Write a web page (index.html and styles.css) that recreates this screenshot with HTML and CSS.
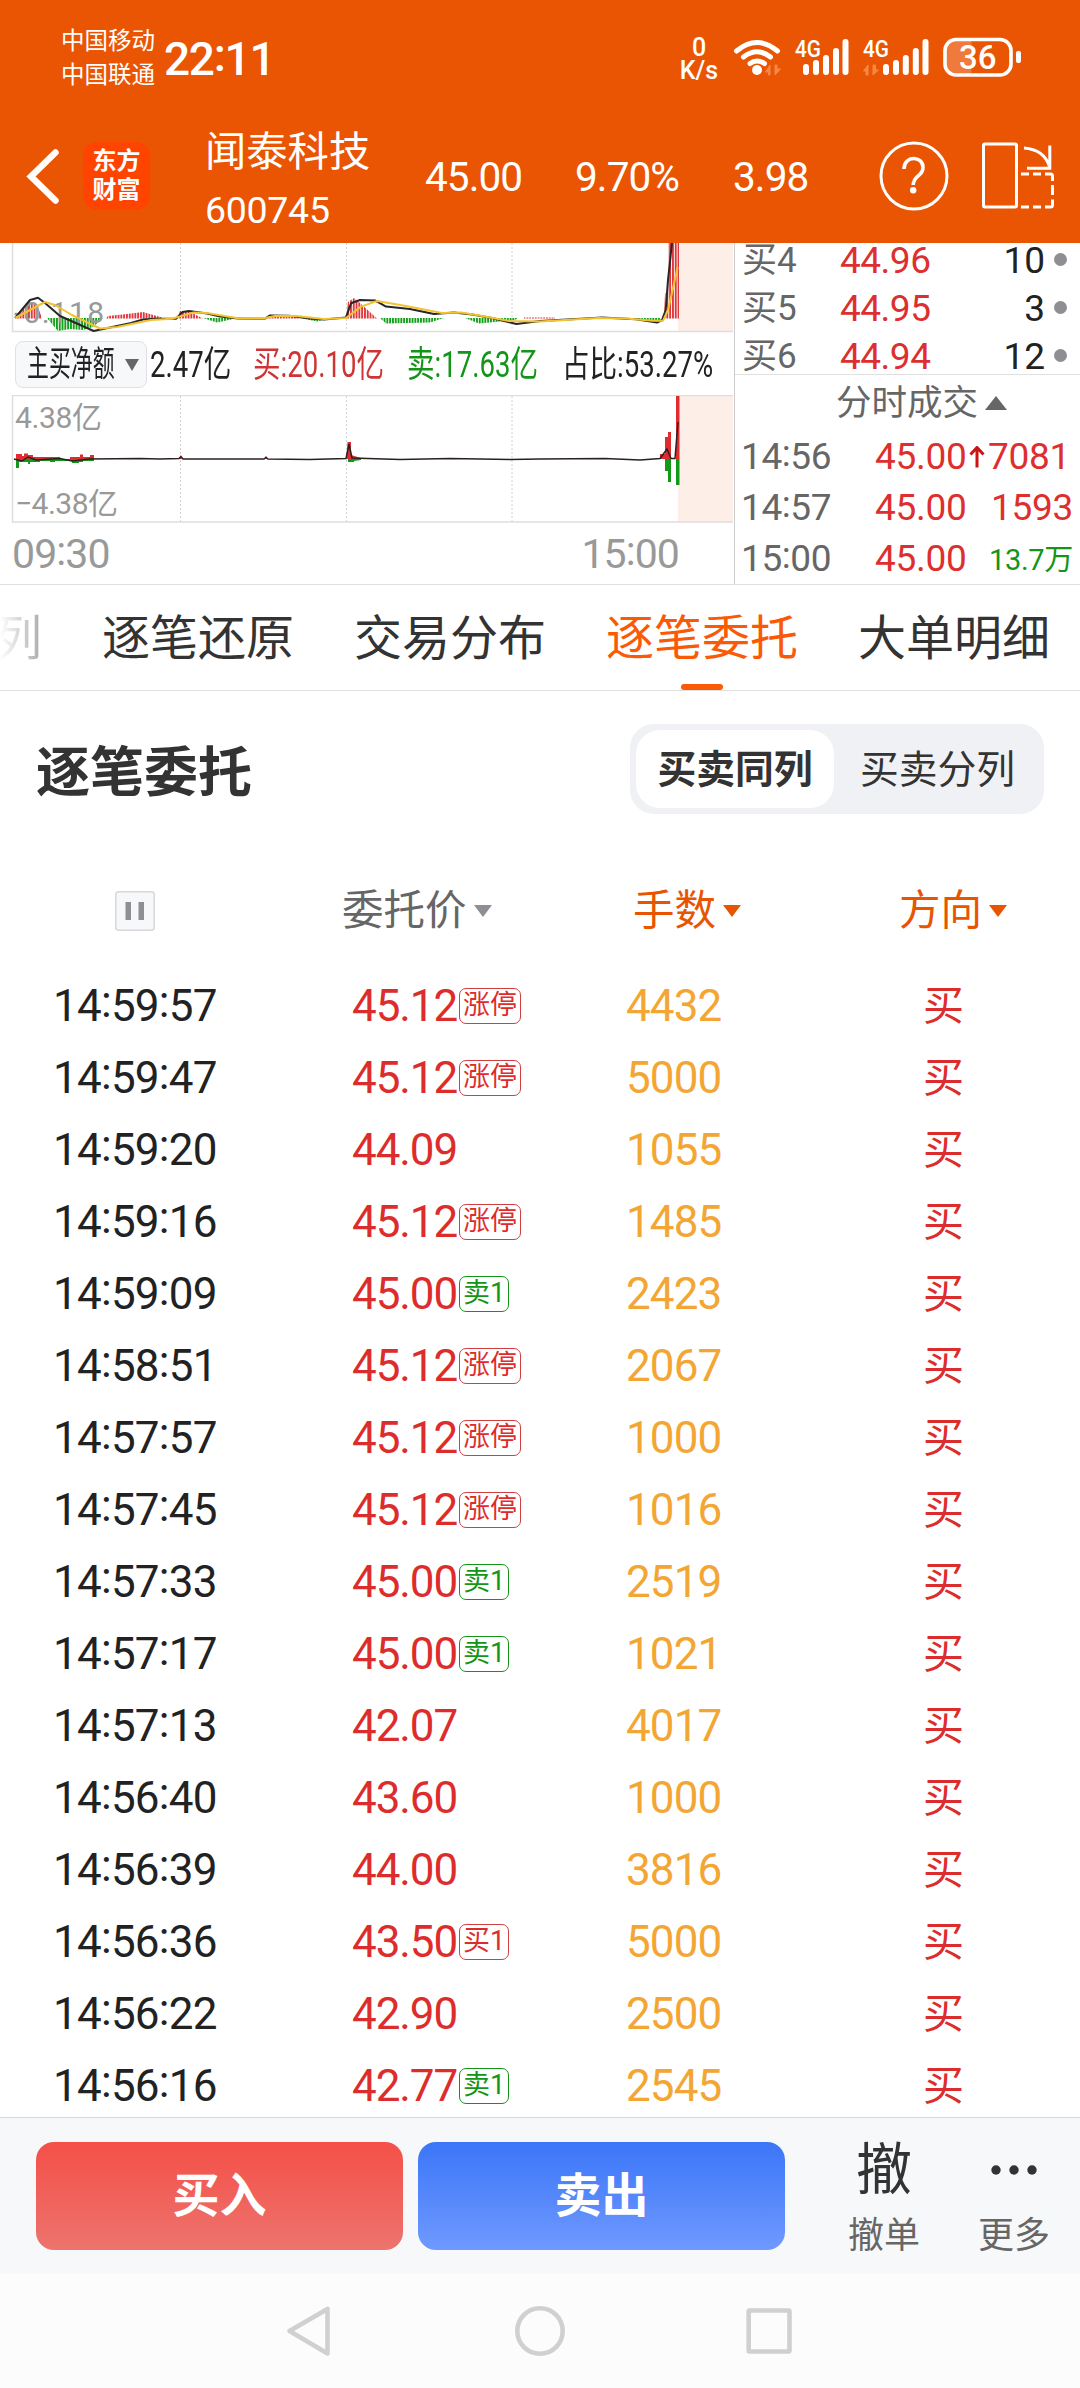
FILE: index.html
```html
<!DOCTYPE html>
<html lang="zh-CN">
<head>
<meta charset="utf-8">
<title>闻泰科技 600745</title>
<link rel="stylesheet" href="styles.css">
</head>
<body>
<div class="screen">
  <header class="top">
    <div class="status">
      <div class="carriers"><span>中国移动</span><span>中国联通</span></div>
      <div class="clock">22<i>:</i>11</div>
      <div class="speed"><span>0</span><span>K/s</span></div>
      <svg class="status-icons" width="300" height="50" viewBox="730 32 300 50">
        <g fill="none" stroke="#fff" stroke-width="5" stroke-linecap="round">
          <path d="M736.5 51 Q757 34 777.500 51"/>
          <path d="M743.500 57 Q757 46.500 770.500 57"/>
          <path d="M750 63.500 Q757 58.500 764.500 63.500"/>
        </g>
        <circle cx="757" cy="70" r="5" fill="#fff"/>
        <g fill="#f68748">
          <path d="M770 75V65L765.500 72H768.500V75ZM775 65V75L780.500 69H777V65Z" stroke="#f68748"/>
          <path d="M868 75V65L863.500 71H866V75ZM873 65V75L878.500 70H875.500V65Z" stroke="#f68748"/>
        </g>
        <g fill="#fff" class="net-label">
          <text x="795" y="56.500" textLength="26" lengthAdjust="spacingAndGlyphs">4G</text>
          <text x="863" y="56.500" textLength="26" lengthAdjust="spacingAndGlyphs">4G</text>
        </g>
        <g stroke="#fff" stroke-width="6" stroke-linecap="round">
          <path d="M806 67V72M816 63V72M826 58V72M836 51V72M845.500 42V72"/>
          <path d="M886 67V72M896 63V72M905.800 58V72M915.800 51V72M925.500 42V72"/>
        </g>
        <path d="M971.500 40V75H957Q946 75 946 64V50Q946 40 957 40Z" fill="#f07a3b"/>
        <rect x="945" y="39.500" width="66" height="35.500" rx="11" fill="none" stroke="#fff" stroke-width="3.600"/>
        <rect x="1016" y="51" width="5" height="12" rx="2" fill="#fff"/>
        <text x="959" y="69" class="battery" textLength="37.500" lengthAdjust="spacingAndGlyphs">36</text>
      </svg>
    </div>
    <div class="titlebar">
      <svg class="back" width="34" height="60" viewBox="0 0 34 60"><path d="M29.500 6.500L5 30.500L29.500 54.500" fill="none" stroke="#fff" stroke-width="6.500" stroke-linecap="round" stroke-linejoin="miter"/></svg>
      <div class="logo"><span>东方</span><span>财富</span></div>
      <div class="stock"><span class="stock-name">闻泰科技</span><span class="stock-code">600745</span></div>
      <span class="quote price">45.00</span>
      <span class="quote pct">9.70%</span>
      <span class="quote chg">3.98</span>
      <svg class="help" width="70" height="70" viewBox="879 140.500 70 70" fill="none" stroke="#fff" stroke-width="3">
        <circle cx="914" cy="175.500" r="33"/>
        <path d="M904 168.500C904 154.500 923 155 923 167C923 176 913.200 175 913.200 184.500" stroke-width="3.600"/>
        <circle cx="913.200" cy="189.800" r="3.200" fill="#fff" stroke="none"/>
      </svg>
      <svg class="rotate" width="76" height="70" viewBox="980 140.500 76 70" fill="none" stroke="#fff" stroke-width="3">
        <rect x="983.500" y="143.500" width="33" height="63" rx="1.500"/>
        <path d="M1024 147.500Q1044 149 1049.500 166M1049.800 145V167.700H1027"/>
        <path d="M1021 173.500H1029M1033 173.500H1041M1045 173.500H1050.500Q1052.500 173.500 1052.500 175.500V180.500M1052.500 184.500V194.500M1052.500 199V204.500Q1052.500 206.500 1050.500 206.500H1045M1041 206.500H1033M1029 206.500H1021"/>
      </svg>
    </div>
  </header>

  <section class="market">
    <div class="charts">
      <svg width="734" height="91" viewBox="0 243 734 91">
        <defs>
          <pattern id="red" width="2.800" height="10" patternUnits="userSpaceOnUse"><rect width="1.900" height="10" fill="#e0383c"/></pattern>
          <pattern id="green" width="2.800" height="10" patternUnits="userSpaceOnUse"><rect width="1.900" height="10" fill="#14a01a"/></pattern>
        </defs>
        <rect x="678" y="243" width="55" height="88" fill="#fdeee8"/>
        <path d="M180.500 243V331M346.500 243V331M512 243V331" stroke="#d2d2d2" stroke-dasharray="2 2"/>
        <path d="M12.500 243V331.500H733" fill="none" stroke="#dedede" stroke-width="1.500"/>
        <path fill="url(#red)" d="M15 318.500L30 301L38 307L42 318.500ZM106 318.500L108 316L127 314L143 312L162 317.500V318.500ZM177 318.500L180 311H188L203 318.500ZM265 318.500L270 315L290 316L300 318.500ZM346 318.500L348 302L354 298L360 303L377 318.500ZM524 317.500H555V318.500H524ZM664 318.500L665 293H668V243H679V318.500Z"/>
        <path fill="url(#green)" d="M47 318L58 331L70 329L83 330L93 327L103 318ZM203 318L217 322.500L238 318ZM300 318L317 321.500L330 318ZM380 318L386 323.500L430 322.500L444 318ZM465 318L479 323.500L515 320L518 318ZM630 318H660V320H640Z"/>
        <text class="axis" x="14" y="323" textLength="90">-0.118</text>
        <path fill="none" stroke="#272727" stroke-width="2" stroke-linejoin="round" d="M15 318L30 300L38 297.700L45 303L60 316L69 320L93.700 331L103 329L131 323L143 319.500L155 318.700H176L182.500 312L189 311L207 313.500L220 316.600L238 318.600H265L270 315.400L289 315.700L310 318.600L324 319.600L346 317.400L351 303.300L360 300L375.500 300.600L386 306.600L410 309L434 314L454 312.600L472 314.600L492 318L516.500 324L540 321L585 318.600L602 317.600L636 319.300L657 322.600L662 320L665.700 310L668 280L672 243"/>
        <path fill="none" stroke="#f3c32f" stroke-width="2" stroke-linejoin="round" d="M15 318L45 302L55 305L72 315L100 328.500L117 327L151 320L172 318.700L193 312.600L207 313L238 318.300L265 318L275 316L296 316L324 319L346 318L361 306.600L377 301L406 306L442 313L461 312.600L482 316L509 321L540 321.600L598 318L626 318.400L653 320.700H663L668 310L672.600 290L677.700 267"/>
      </svg>
      <div class="stats">
        <div class="picker"><span class="narrow">主买净额</span><svg width="14" height="12"><path d="M0 0H14L7 12Z" fill="#666"/></svg></div>
        <div class="stat net"><span>2.47亿</span></div>
        <div class="stat buy"><span>买:20.10亿</span></div>
        <div class="stat sell"><span>卖:17.63亿</span></div>
        <div class="stat ratio"><span>占比:53.27%</span></div>
      </div>
      <svg width="734" height="129" viewBox="0 395 734 129">
        <rect x="678" y="396" width="55" height="126" fill="#fdeee8"/>
        <path d="M180.500 396V522M346.500 396V522M512 396V522" stroke="#d2d2d2" stroke-dasharray="2 2"/>
        <path d="M733 395.500H12.500V522H733" fill="none" stroke="#dedede" stroke-width="1.500"/>
        <path fill="#e02c30" d="M16 459V454H22V456H24V453.500H28V455H33V457H60V459ZM70 459V457H80V454.500H83V457H90V455H94V459ZM179 459L180.500 455L182 459ZM264 459L266 456L268 459ZM346.500 459L347.500 442H351V455L361 458V459ZM660 459V454H665V437H668V432H671V459ZM676 396H679.500V459H676Z"/>
        <path fill="#119a18" d="M16 459H94V461H83V462H79V463H72V461H55V462H50V461H40V462H30V464H28V462H19V468H16ZM348 459H361V460L354 461V462H348ZM665 459H671V482H668V471H665ZM676 459H679.500V485H676Z"/>
        <path fill="none" stroke="#2b2020" stroke-width="1.500" d="M14 459L22 461L28 457L36 460L60 458.500L72 461L90 459L140 458.500L160 459L179 458.500L181 456.500L183 459H264L266 457.500L268 459L310 459.500L346 458.500L349 444L352 458L400 459.500L450 458.500L510 459.500L540 459L605 458.500L640 460L660 458.500L667 449L671 458.500H675L678 422"/>
        <text class="axis" x="15" y="428" textLength="87">4.38亿</text>
        <text class="axis" x="15" y="514" textLength="103">−4.38亿</text>
      </svg>
      <div class="times"><span>09<i>:</i>30</span><span>15<i>:</i>00</span></div>
    </div>
    <div class="book">
      <div class="bids">
        <div class="bid"><span>买4</span><b>44.96</b><em>10</em></div>
        <div class="bid"><span>买5</span><b>44.95</b><em>3</em></div>
        <div class="bid"><span>买6</span><b>44.94</b><em>12</em></div>
      </div>
      <div class="ticks-title">分时成交<svg width="22" height="14"><path d="M0 14L11 0L22 14Z" fill="#666"/></svg></div>
      <div class="tick"><span>14<i>:</i>56</span><b>45.00</b><svg width="16" height="22"><path d="M8 21.500V2M1.500 8.500L8 1.500L14.500 8.500" fill="none" stroke="#c91414" stroke-width="3"/></svg><em class="near">7081</em></div>
      <div class="tick"><span>14<i>:</i>57</span><b>45.00</b><em>1593</em></div>
      <div class="tick"><span>15<i>:</i>00</span><b>45.00</b><em class="small">13.7万</em></div>
    </div>
  </section>

  <nav class="tabs"><span class="tab fade">列</span><span class="tab">逐笔还原</span><span class="tab">交易分布</span><span class="tab active">逐笔委托</span><span class="tab">大单明细</span></nav>

  <section class="orders">
    <div class="orders-head">
      <h2>逐笔委托</h2>
      <div class="segment"><span class="on">买卖同列</span><span>买卖分列</span></div>
    </div>
    <div class="grid-row thead">
      <div class="pause"><svg width="40" height="40"><rect x=".75" y=".75" width="38.500" height="38.500" rx="3" fill="#f7f8fa" stroke="#d6d8de" stroke-width="1.500"/><path d="M10.500 11h5.500v18h-5.500zM23.500 11h5.500v18h-5.500z" fill="#8e8e93"/></svg></div>
      <div class="h-price">委托价<svg width="18" height="12"><path d="M0 0H18L9 12Z" fill="#8e8e93"/></svg></div>
      <div class="h-qty">手数<svg width="18" height="12"><path d="M0 0H18L9 12Z" fill="#e85502"/></svg></div>
      <div class="h-dir">方向<svg width="18" height="12"><path d="M0 0H18L9 12Z" fill="#e85502"/></svg></div>
    </div>
    <div class="grid-row"><span class="time">14<i>:</i>59<i>:</i>57</span><span class="px">45.12<small>涨停</small></span><span class="qty">4432</span><span class="dir">买</span></div>
    <div class="grid-row"><span class="time">14<i>:</i>59<i>:</i>47</span><span class="px">45.12<small>涨停</small></span><span class="qty">5000</span><span class="dir">买</span></div>
    <div class="grid-row"><span class="time">14<i>:</i>59<i>:</i>20</span><span class="px">44.09</span><span class="qty">1055</span><span class="dir">买</span></div>
    <div class="grid-row"><span class="time">14<i>:</i>59<i>:</i>16</span><span class="px">45.12<small>涨停</small></span><span class="qty">1485</span><span class="dir">买</span></div>
    <div class="grid-row"><span class="time">14<i>:</i>59<i>:</i>09</span><span class="px">45.00<small class="g">卖1</small></span><span class="qty">2423</span><span class="dir">买</span></div>
    <div class="grid-row"><span class="time">14<i>:</i>58<i>:</i>51</span><span class="px">45.12<small>涨停</small></span><span class="qty">2067</span><span class="dir">买</span></div>
    <div class="grid-row"><span class="time">14<i>:</i>57<i>:</i>57</span><span class="px">45.12<small>涨停</small></span><span class="qty">1000</span><span class="dir">买</span></div>
    <div class="grid-row"><span class="time">14<i>:</i>57<i>:</i>45</span><span class="px">45.12<small>涨停</small></span><span class="qty">1016</span><span class="dir">买</span></div>
    <div class="grid-row"><span class="time">14<i>:</i>57<i>:</i>33</span><span class="px">45.00<small class="g">卖1</small></span><span class="qty">2519</span><span class="dir">买</span></div>
    <div class="grid-row"><span class="time">14<i>:</i>57<i>:</i>17</span><span class="px">45.00<small class="g">卖1</small></span><span class="qty">1021</span><span class="dir">买</span></div>
    <div class="grid-row"><span class="time">14<i>:</i>57<i>:</i>13</span><span class="px">42.07</span><span class="qty">4017</span><span class="dir">买</span></div>
    <div class="grid-row"><span class="time">14<i>:</i>56<i>:</i>40</span><span class="px">43.60</span><span class="qty">1000</span><span class="dir">买</span></div>
    <div class="grid-row"><span class="time">14<i>:</i>56<i>:</i>39</span><span class="px">44.00</span><span class="qty">3816</span><span class="dir">买</span></div>
    <div class="grid-row"><span class="time">14<i>:</i>56<i>:</i>36</span><span class="px">43.50<small>买1</small></span><span class="qty">5000</span><span class="dir">买</span></div>
    <div class="grid-row"><span class="time">14<i>:</i>56<i>:</i>22</span><span class="px">42.90</span><span class="qty">2500</span><span class="dir">买</span></div>
    <div class="grid-row"><span class="time">14<i>:</i>56<i>:</i>16</span><span class="px">42.77<small class="g">卖1</small></span><span class="qty">2545</span><span class="dir">买</span></div>
  </section>

  <footer class="actions">
    <button class="btn buy-btn">买入</button>
    <button class="btn sell-btn">卖出</button>
    <div class="action cancel"><span class="glyph">撤</span><span>撤单</span></div>
    <div class="action more"><span class="glyph"><svg width="46" height="12"><g fill="#333"><circle cx="5" cy="6" r="4.700"/><circle cx="23" cy="6" r="4.700"/><circle cx="41" cy="6" r="4.700"/></g></svg></span><span>更多</span></div>
  </footer>
  <div class="sysnav">
    <svg width="1080" height="114" viewBox="0 2274 1080 114" fill="none" stroke="#d0d0d0" stroke-width="4.600" stroke-linejoin="round">
      <path d="M327.500 2309V2353.500L289.500 2331Z"/>
      <circle cx="540" cy="2331" r="22.700"/>
      <rect x="748.700" y="2310.500" width="40.800" height="41" rx="1"/>
    </svg>
  </div>
</div>
</body>
</html>
```
FILE: styles.css
```css
* { box-sizing: border-box; }
body {
  margin: 0;
  background: #fff;
  font-family: Roboto, "Noto Sans CJK SC", sans-serif;
  color: #222;
}
i, em { font-style: normal; }
i { vertical-align: .08em; line-height: 0; }
b { font-weight: 400; }
svg { display: block; flex: none; }
.screen { width: 1080px; height: 2388px; overflow: hidden; display: flex; flex-direction: column; }
.screen > * { flex: none; }

/* orange header */
.top { height: 243px; background: #ea5504; color: #fff; }
.status { height: 115px; padding-left: 61px; display: flex; align-items: center; }
.carriers { display: flex; flex-direction: column; width: 103px; font-size: 23.5px; line-height: 34px; }
.clock { width: 517px; font-size: 46px; font-weight: 500; line-height: 60px; letter-spacing: -1.3px; padding-top: 2px; }
.speed { width: 36px; display: flex; flex-direction: column; align-items: center; font-size: 25px; line-height: 23px; font-weight: 500; margin-right: 13px; padding-top: 2px; }
.status-icons { margin-top: -1px; }
.net-label { font-size: 23px; font-weight: 500; }
.battery { font-size: 33px; font-weight: 500; fill: #fff; }
.titlebar { height: 128px; display: flex; align-items: center; padding-left: 26px; }
.titlebar > * { margin-top: -7px; flex: none; }
.logo { width: 67px; height: 68px; margin-left: 23px; border-radius: 14px; background: #ff4400; display: flex; flex-direction: column; justify-content: center; align-items: center; font-size: 24px; line-height: 29px; font-weight: 700; }
.titlebar .stock { width: 220px; margin-top: 4px; margin-left: 55px; display: flex; flex-direction: column; }
.stock-name { font-size: 41.3px; line-height: 58px; }
.stock-code { font-size: 37.5px; line-height: 58px; letter-spacing: -.3px; }
.titlebar .quote { font-size: 40.5px; line-height: 60px; letter-spacing: -.9px; margin-top: -4px; }
.price { width: 150px; }
.pct { width: 158px; }
.chg { width: 146px; }
.rotate { margin-left: 31px; }

/* charts and order book */
.market { height: 342px; display: flex; border-bottom: 1px solid #e0e0e0; }
.charts { width: 734px; display: flex; flex-direction: column; }
.axis { font-size: 30px; fill: #999; }
.stats { height: 61px; padding-left: 15px; display: flex; align-items: center; font-size: 36px; line-height: 46px; }
.picker { width: 132px; height: 47px; border: 1px solid #dfe1e6; border-radius: 8px; background: #f7f8fa; display: flex; align-items: center; padding-left: 11px; }
.narrow { width: 98px; font-size: 35px; white-space: nowrap; transform: scaleX(.625); transform-origin: left; }
.stat { white-space: nowrap; }
.stat span { display: inline-block; transform: scaleX(.765); transform-origin: left; }
.net { width: 103px; padding-left: 3px; }
.buy { width: 154px; padding-left: 3px; color: #cf3434; }
.sell { width: 155px; padding-left: 3px; color: #149418; }
.ratio { width: 160px; padding-left: 3px; }
.times { display: flex; justify-content: space-between; padding: 0 55px 0 12px; font-size: 41px; line-height: 60px; letter-spacing: -.9px; color: #999; }
.book { flex: 1; border-left: 1px solid #ccc; display: flex; flex-direction: column; }
.bids { height: 132px; border-bottom: 1px solid #e0e0e0; display: flex; flex-direction: column; gap: 12px; }
.bid { height: 36px; display: flex; align-items: center; font-size: 37px; line-height: 38px; padding-left: 7px; color: #666; flex: none; }
.bid span { width: 98px; font-size: 35px; }
.bid b { width: 91px; color: #dd2f2f; letter-spacing: -.5px; }
.bid em { flex: 1; text-align: right; color: #222; }
.bid::after { content: ""; width: 13px; height: 13px; border-radius: 50%; background: #8e8e93; margin: 0 13px 3px 9px; }
.ticks-title { height: 59px; padding-left: 101px; display: flex; align-items: center; gap: 7px; font-size: 35.5px; line-height: 50px; color: #666; }
.tick { height: 51px; display: flex; align-items: center; padding: 0 7px 0 6px; font-size: 37px; line-height: 51px; color: #666; }
.tick span { width: 134px; letter-spacing: -.4px; }
.tick b { width: 94px; color: #dd2f2f; letter-spacing: -.3px; }
.tick em { flex: 1; text-align: right; color: #dd2f2f; letter-spacing: -.3px; }
.tick .near { padding-right: 3px; }
.tick .small { font-size: 29px; color: #149418; padding-top: 4px; }

/* tabs */
.tabs { height: 106px; border-bottom: 1px solid #e0e0e0; display: flex; gap: 60px; font-size: 48px; line-height: 108px; color: #333; }
.tab { position: relative; white-space: nowrap; }
.fade { width: 42px; display: flex; justify-content: flex-end; background: linear-gradient(90deg, #fff, #aaa); background-clip: text; color: transparent; }
.active { color: #fa5a05; }
.active::after { content: ""; position: absolute; left: 75px; bottom: 0; width: 42px; height: 6px; border-radius: 3px; background: #fa5a05; }

/* order list */
.orders { height: 1426px; overflow: hidden; }
.orders-head { display: flex; justify-content: space-between; align-items: center; padding: 33px 36px 0; color: #333; }
h2 { margin: 10px 0 0; font-size: 54px; line-height: 80px; font-weight: 700; }
.segment { width: 414px; height: 90px; padding: 6px; border-radius: 24px; background: #f0f1f4; display: flex; font-size: 38.8px; line-height: 80px; text-align: center; }
.segment span { flex: 1; padding-left: 3px; }
.segment .on { flex: none; width: 198px; height: 78px; padding-left: 0; border-radius: 24px; background: #fff; font-weight: 700; }
.grid-row { display: grid; grid-template-columns: 352px 274px 297px 1fr; height: 72px; align-items: center; font-size: 44px; line-height: 72px; letter-spacing: -.6px; white-space: nowrap; }
.thead { height: 156px; padding-top: 38px; font-size: 41.5px; letter-spacing: 0; color: #666; }
.thead > div { display: flex; align-items: center; gap: 7px; }
.pause { padding-left: 115px; }
.h-price { margin-left: -10px; }
.h-qty { padding-left: 7px; color: #e85502; }
.h-dir { margin-left: -24px; color: #e85502; }
.time { padding-left: 53px; letter-spacing: -.75px; }
.px { color: #dd2c2c; display: flex; align-items: center; letter-spacing: -1.1px; }
.px small { height: 36px; padding: 0 3px 0 3px; margin-left: 2px; border: 1.500px solid #d04040; border-radius: 7px; font-size: 27px; line-height: 33px; letter-spacing: 0; }
.px .g { color: #149418; border-color: #149418; }
.qty { color: #f3a633; letter-spacing: -.9px; }
.dir { color: #dd2c2c; font-size: 41px; }

/* bottom bar */
.actions { height: 157px; background: #f7f8fa; border-top: 1px solid #d5d7d9; display: flex; padding: 24px 0 0 36px; }
.btn { width: 367px; height: 108px; margin: 0 15px 0 0; padding: 0; border: 0; border-radius: 18px; color: #fff; font: 700 47px/106px Roboto, "Noto Sans CJK SC", sans-serif; }
.buy-btn { background: linear-gradient(#f45048, #ed736d); }
.sell-btn { background: linear-gradient(#3b76f8, #6f99ff); }
.action { width: 120px; display: flex; flex-direction: column; align-items: center; font-size: 36px; line-height: 52px; color: #666; }
.cancel { margin-left: 24px; }
.more { margin-left: 10px; }
.glyph { height: 68px; display: flex; align-items: center; font-size: 56px; line-height: 54px; color: #333; padding-bottom: 13px; }
.sysnav { height: 114px; background: #fcfcfc; }
```
